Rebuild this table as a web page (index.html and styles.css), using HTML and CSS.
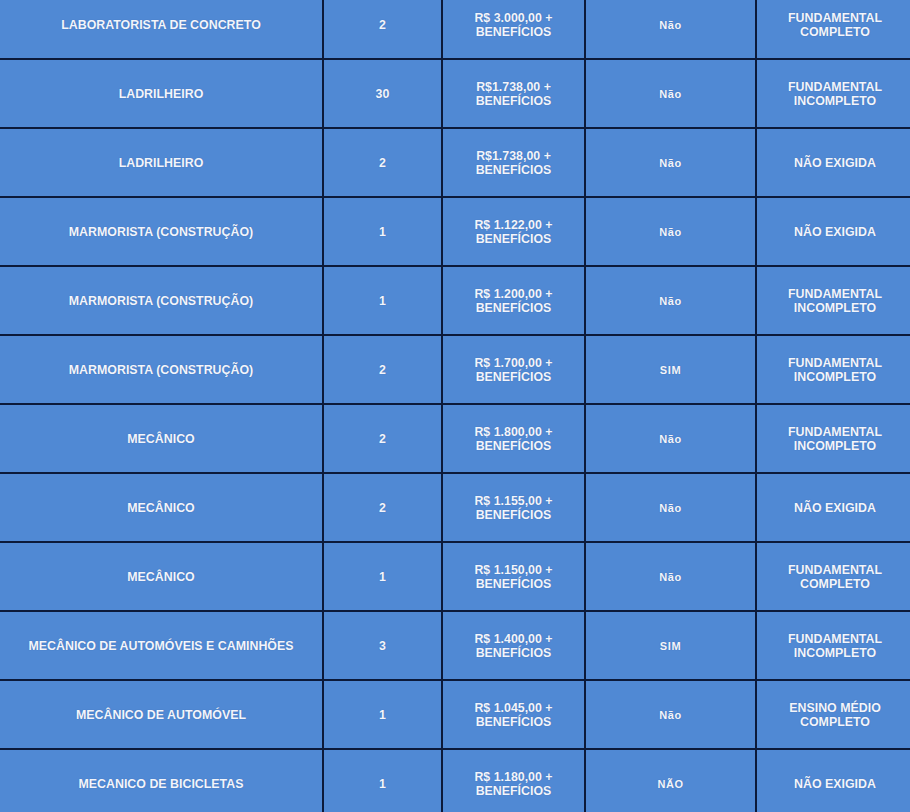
FILE: index.html
```html
<!DOCTYPE html>
<html lang="pt-BR">
<head>
<meta charset="utf-8">
<title>Vagas</title>
<link rel="stylesheet" href="styles.css">
</head>
<body>
<table class="vagas">
  <colgroup>
    <col class="c-cargo"><col class="c-qtd"><col class="c-sal"><col class="c-exp"><col class="c-esc">
  </colgroup>
  <tbody>
    <tr><td>LABORATORISTA DE CONCRETO</td><td>2</td><td>R$ 3.000,00 +<br>BENEFÍCIOS</td><td class="sm">Não</td><td>FUNDAMENTAL<br>COMPLETO</td></tr>
    <tr><td>LADRILHEIRO</td><td>30</td><td>R$1.738,00 +<br>BENEFÍCIOS</td><td class="sm">Não</td><td>FUNDAMENTAL<br>INCOMPLETO</td></tr>
    <tr><td>LADRILHEIRO</td><td>2</td><td>R$1.738,00 +<br>BENEFÍCIOS</td><td class="sm">Não</td><td>NÃO EXIGIDA</td></tr>
    <tr><td>MARMORISTA (CONSTRUÇÃO)</td><td>1</td><td>R$ 1.122,00 +<br>BENEFÍCIOS</td><td class="sm">Não</td><td>NÃO EXIGIDA</td></tr>
    <tr><td>MARMORISTA (CONSTRUÇÃO)</td><td>1</td><td>R$ 1.200,00 +<br>BENEFÍCIOS</td><td class="sm">Não</td><td>FUNDAMENTAL<br>INCOMPLETO</td></tr>
    <tr><td>MARMORISTA (CONSTRUÇÃO)</td><td>2</td><td>R$ 1.700,00 +<br>BENEFÍCIOS</td><td class="sm">SIM</td><td>FUNDAMENTAL<br>INCOMPLETO</td></tr>
    <tr><td>MECÂNICO</td><td>2</td><td>R$ 1.800,00 +<br>BENEFÍCIOS</td><td class="sm">Não</td><td>FUNDAMENTAL<br>INCOMPLETO</td></tr>
    <tr><td>MECÂNICO</td><td>2</td><td>R$ 1.155,00 +<br>BENEFÍCIOS</td><td class="sm">Não</td><td>NÃO EXIGIDA</td></tr>
    <tr><td>MECÂNICO</td><td>1</td><td>R$ 1.150,00 +<br>BENEFÍCIOS</td><td class="sm">Não</td><td>FUNDAMENTAL<br>COMPLETO</td></tr>
    <tr><td>MECÂNICO DE AUTOMÓVEIS E CAMINHÕES</td><td>3</td><td>R$ 1.400,00 +<br>BENEFÍCIOS</td><td class="sm">SIM</td><td>FUNDAMENTAL<br>INCOMPLETO</td></tr>
    <tr><td>MECÂNICO DE AUTOMÓVEL</td><td>1</td><td>R$ 1.045,00 +<br>BENEFÍCIOS</td><td class="sm">Não</td><td>ENSINO MÉDIO<br>COMPLETO</td></tr>
    <tr><td>MECANICO DE BICICLETAS</td><td>1</td><td>R$ 1.180,00 +<br>BENEFÍCIOS</td><td class="sm">NÃO</td><td>NÃO EXIGIDA</td></tr>
  </tbody>
</table>
</body>
</html>
```
FILE: styles.css
```css
html, body {
  margin: 0;
  padding: 0;
  background: #5089d4;
  overflow: hidden;
}

.vagas {
  border-collapse: collapse;
  table-layout: fixed;
  width: 915px;
  margin-top: -11px;
  margin-left: -2px;
  background: #5089d4;
  font-family: "Liberation Sans", Arial, sans-serif;
  font-weight: bold;
  font-size: 12.4px;
  line-height: 14px;
  color: #f2f5fc;
}

.c-cargo { width: 324px; }
.c-qtd { width: 119px; }
.c-sal { width: 143px; }
.c-exp { width: 171px; }
.c-esc { width: 158px; }

.vagas td {
  height: 69px;
  padding: 0 4px;
  box-sizing: border-box;
  border: 2px solid #0c1a3a;
  text-align: center;
  vertical-align: middle;
  text-shadow: 0 0 1px rgba(40, 70, 130, 0.5);
}

.vagas td.sm {
  font-size: 11px;
  letter-spacing: 0.6px;
}
```
